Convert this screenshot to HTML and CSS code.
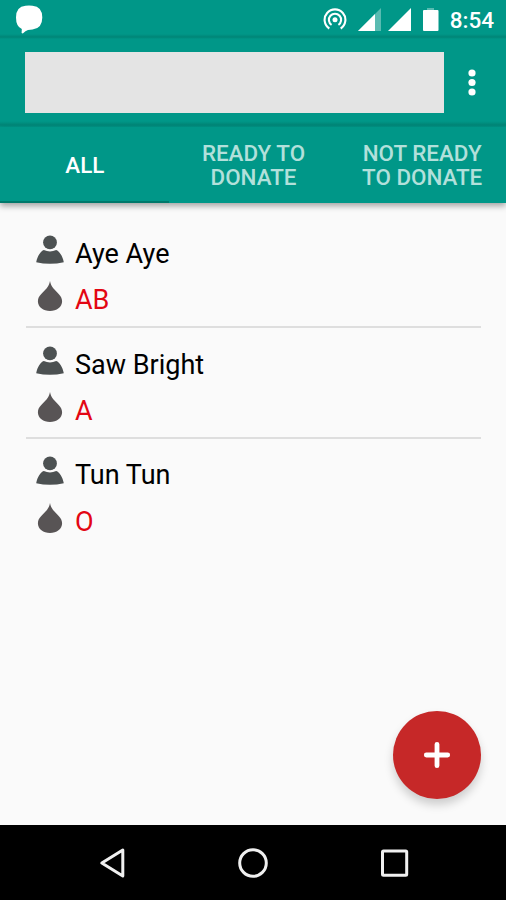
FILE: index.html
```html
<!DOCTYPE html>
<html lang="en">
<head>
  <meta charset="UTF-8" />
  <meta name="viewport" content="width=device-width, initial-scale=1.0"/>
  <title>Donors</title>
  <link rel="stylesheet" href="styles.css">
</head>
<body>
  <!-- shared list icons -->
  <svg class="sprite" width="0" height="0">
    <symbol id="person" viewBox="0 0 28 30">
      <circle cx="14" cy="7.4" r="6.9" />
      <path d="M7.8 15 Q14 17.8 20.2 15 C23.5 16.2 26.6 21 27.8 27.2 Q21 28.8 14 28.8 Q7 28.8 .2 27.2 C1.4 21 4.5 16.2 7.8 15Z" />
    </symbol>
    <symbol id="drop" viewBox="0 0 28 30">
      <path d="M14 0 C14.5 3 15.6 5 17.5 7.6 C20.5 11.2 26.1 14.8 26.1 20.2 C26.1 26 20.6 30 14 30 C7.4 30 1.9 26 1.9 20.2 C1.9 14.8 7.5 11.2 10.5 7.6 C12.4 5 13.5 3 14 0Z" />
    </symbol>
  </svg>

  <div class="screen">
    <div class="status-bar">
      <svg class="chat" width="28" height="30" viewBox="0 0 28 30">
        <path d="M10.5 .7 Q14 .4 17.5 .7 Q27.3 1.5 27.3 12.5 Q27.3 23.5 17.5 24.5 L13 25 Q10.5 25.5 7.8 28.6 L6.6 28 L6.8 24 Q1 21.5 1 12.5 Q1 1.5 10.5 .7Z" fill="#fff" />
      </svg>
      <div class="status-icons">
        <svg width="24" height="24" viewBox="0 0 24 24" fill="none" stroke="#fff" stroke-width="2.1">
          <path d="M6.3 21.5 A10.4 10.4 0 1 1 17.7 21.5" />
          <path d="M8.6 17.9 A6.1 6.1 0 1 1 15.4 17.9" />
          <circle cx="12" cy="12.8" r="2.5" fill="#fff" stroke="none" />
        </svg>
        <svg width="23" height="23" viewBox="0 0 23 23">
          <path d="M0 23 L23 0 V23Z" fill="#fff" fill-opacity=".35" />
          <path d="M0 23 L17 6 V23Z" fill="#fff" />
        </svg>
        <svg width="23" height="23" viewBox="0 0 23 23">
          <path d="M0 23 L23 0 V23Z" fill="#fff" />
        </svg>
        <svg width="16" height="24" viewBox="0 0 16 24">
          <path d="M4 1 H11 V4 H4Z" fill="#fff" fill-opacity=".35" />
          <rect x="0" y="3" width="15.5" height="21" rx="1" fill="#fff" />
        </svg>
      </div>
      <span class="time">8:54</span>
    </div>

    <div class="toolbar">
      <div class="search"></div>
      <svg class="more" width="8" height="28" viewBox="0 0 8 28" fill="#fff">
        <circle cx="4" cy="5" r="3.6" />
        <circle cx="4" cy="14.5" r="3.6" />
        <circle cx="4" cy="24" r="3.6" />
      </svg>
    </div>

    <div class="tabs">
      <div class="tab active">ALL</div>
      <div class="tab">READY TO<br>DONATE</div>
      <div class="tab">NOT READY<br>TO DONATE</div>
    </div>

    <div class="donor-list">
      <div class="donor">
        <div class="line name"><svg><use href="#person" /></svg><span>Aye Aye</span></div>
        <div class="line blood"><svg><use href="#drop" /></svg><span>AB</span></div>
      </div>
      <div class="donor">
        <div class="line name"><svg><use href="#person" /></svg><span>Saw Bright</span></div>
        <div class="line blood"><svg><use href="#drop" /></svg><span>A</span></div>
      </div>
      <div class="donor">
        <div class="line name"><svg><use href="#person" /></svg><span>Tun Tun</span></div>
        <div class="line blood"><svg><use href="#drop" /></svg><span>O</span></div>
      </div>
    </div>

    <div class="fab">
      <svg width="28" height="28" viewBox="0 0 28 28" stroke="#fff" stroke-width="4.8" stroke-linecap="round">
        <path d="M14 3.3 V24.7 M3.3 14 H24.7" />
      </svg>
    </div>

    <div class="nav-bar">
      <svg width="32" height="32" viewBox="0 0 32 32">
        <path d="M5.8 16 L26.8 3 V29Z" />
      </svg>
      <svg width="32" height="32" viewBox="0 0 32 32">
        <circle cx="16" cy="16" r="13.3" />
      </svg>
      <svg width="32" height="32" viewBox="0 0 32 32">
        <rect x="4.5" y="4" width="24.2" height="24.2" rx="1" />
      </svg>
    </div>
  </div>
</body>
</html>
```

FILE: styles.css
```css
* {
  box-sizing: border-box;
}

body {
  margin: 0;
  font-family: Roboto, sans-serif;
  background: #fafafa;
}

svg {
  display: block;
  flex: none;
}

.sprite {
  position: absolute;
}

.screen {
  position: relative;
  display: flex;
  flex-direction: column;
  width: 506px;
  height: 900px;
  overflow: hidden;
}

.status-bar {
  display: flex;
  align-items: flex-start;
  height: 39px;
  padding: 5px 12px 0 15px;
  background: linear-gradient(#009788 34px, #008577 37px, #009788 39px);
}

.status-icons {
  display: flex;
  align-items: flex-end;
  gap: 7px;
  height: 25.5px;
  margin-left: auto;
}

.status-icons svg:first-child {
  margin-right: 4px;
}

.status-icons svg:last-child {
  margin-left: 5px;
}

.time {
  margin-left: 11px;
  color: #fff;
  font-size: 22.5px;
  font-weight: 500;
  line-height: 30px;
}

.toolbar {
  display: flex;
  align-items: center;
  height: 88px;
  padding: 0 30px 2px 25px;
  background: linear-gradient(#009788 82px, #008577 86px, #009788 88px);
}

.search {
  width: 419px;
  height: 61px;
  background: #e4e4e4;
}

.more {
  margin-left: auto;
}

.tabs {
  display: grid;
  grid-template-columns: repeat(3, 1fr);
  height: 76px;
  background: #009788;
  box-shadow: 0 3px 6px rgba(0,0,0,0.35);
}

.tab {
  display: flex;
  align-items: center;
  justify-content: center;
  padding: 2px 0 0 1px;
  text-align: center;
  color: #b2e0db;
  font-size: 22.4px;
  font-weight: 500;
  line-height: 24px;
  border-bottom: 2px solid #009788;
}

.tab.active {
  color: #fff;
  border-bottom-color: #00796b;
}

.donor-list {
  flex: 1;
  padding: 14.6px 25px 0 26px;
}

.donor {
  height: 110.7px;
  padding: 13px 10px 0;
  border-bottom: 2px solid #dedede;
}

.donor:last-child {
  border-bottom: none;
}

.line {
  display: flex;
  align-items: center;
  gap: 11px;
  height: 46.5px;
  font-size: 27px;
  color: #000;
}

.line svg {
  width: 28px;
  height: 30px;
  margin-top: -8px;
}

.name svg {
  fill: #4c5152;
}

.blood {
  color: #e30613;
}

.blood svg {
  fill: #585455;
}

.fab {
  position: absolute;
  right: 25px;
  bottom: 101px;
  display: flex;
  align-items: center;
  justify-content: center;
  width: 88px;
  height: 88px;
  border-radius: 50%;
  background: #c62828;
  box-shadow: 0 6px 10px rgba(0,0,0,0.18);
}

.nav-bar {
  display: flex;
  justify-content: center;
  align-items: center;
  gap: 109px;
  height: 75px;
  background: #000;
}

.nav-bar svg {
  fill: none;
  stroke: #f0f0f0;
  stroke-width: 3;
  stroke-linejoin: round;
}
```
